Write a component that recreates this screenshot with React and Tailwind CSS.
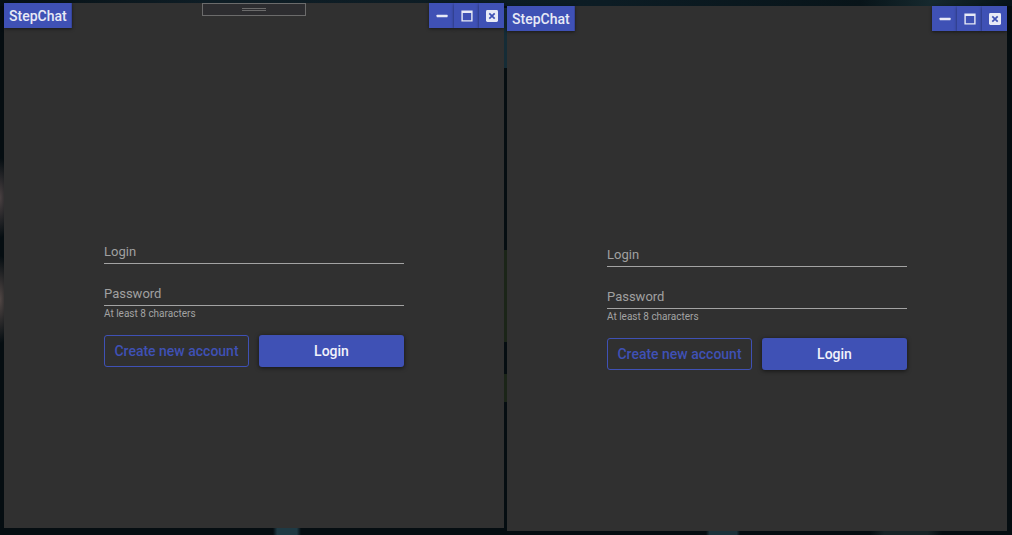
import React, { useId } from "react";

function MinimizeIcon() {
  return (
    <svg viewBox="0 0 16 16" className="size-4" fill="currentColor" aria-hidden="true">
      <rect x="2.6" y="6.8" width="11" height="2.4" rx="0.4" />
    </svg>
  );
}

function MaximizeIcon() {
  return (
    <svg viewBox="0 0 16 16" className="size-4" fill="currentColor" aria-hidden="true">
      <path fillRule="evenodd" d="M2.4 2.4h11.2v11.2H2.4zM3.8 5v7.2h8.4V5z" />
    </svg>
  );
}

function CloseIcon() {
  return (
    <svg viewBox="0 0 16 16" className="size-4" aria-hidden="true">
      <rect x="2" y="2" width="12" height="12" rx="1.4" fill="currentColor" />
      <path d="M5.3 5.3l5.4 5.4M10.7 5.3l-5.4 5.4" stroke="#3f51b5" strokeWidth="1.7" fill="none" />
    </svg>
  );
}

function TitleButton({ label, children }) {
  return (
    <button
      type="button"
      aria-label={label}
      className="flex h-full w-[25px] items-center justify-center bg-[#3f51b5] text-[#e8eaf6] shadow-[0_1px_3px_rgba(0,0,0,0.5)]"
    >
      {children}
    </button>
  );
}

function Field({ label, type, autoComplete, hint }) {
  const id = useId();
  return (
    <div className="flex flex-col">
      <div className="grid">
        <input
          id={id}
          type={type}
          autoComplete={autoComplete}
          placeholder=" "
          className="peer col-start-1 row-start-1 h-6 w-full border-b border-[#a3a3a3] bg-transparent text-[13px] leading-5 text-white outline-none"
        />
        <label
          htmlFor={id}
          className="invisible pointer-events-none col-start-1 row-start-1 self-center pb-px text-[13px] leading-5 text-[#a0a0a0] peer-placeholder-shown:visible"
        >
          {label}
        </label>
      </div>
      {hint && <p className="text-[10px] leading-[15px] text-[#a3a3a3]">{hint}</p>}
    </div>
  );
}

function LoginWindow({ className, handle }) {
  return (
    <section className={`relative flex min-w-0 flex-1 flex-col bg-[#303030] ${className}`}>
      <header className="flex h-[25px] items-stretch justify-between">
        <h1 className="flex items-center bg-[#3f51b5] px-[5px] text-[14px] leading-5 font-medium text-[#e8eaf6] shadow-[0_1px_3px_rgba(0,0,0,0.5),inset_-1px_0_0_#35449c]">
          StepChat
        </h1>
        <div className="flex">
          <TitleButton label="Minimize">
            <MinimizeIcon />
          </TitleButton>
          <TitleButton label="Maximize">
            <MaximizeIcon />
          </TitleButton>
          <TitleButton label="Close">
            <CloseIcon />
          </TitleButton>
        </div>
      </header>

      {handle && (
        <div className="absolute top-0 left-1/2 flex h-[13px] w-[104px] -translate-x-1/2 items-center justify-center border border-[#6b6b6b] bg-[#2d2d30]">
          <div className="h-[3px] w-6 border-y border-[#6b6b6b]" />
        </div>
      )}

      <div className="flex flex-1 items-center justify-center">
        <form
          className="flex w-[300px] flex-col gap-[18px] pt-[51px]"
          onSubmit={(event) => event.preventDefault()}
        >
          <Field label="Login" type="text" autoComplete="username" />
          <div className="flex flex-col gap-[14px]">
            <Field
              label="Password"
              type="password"
              autoComplete="current-password"
              hint="At least 8 characters"
            />
            <div className="grid grid-cols-2 gap-[10px]">
              <button
                type="button"
                className="h-8 rounded-[3px] border border-[#3f51b5] text-[14px] leading-5 font-medium whitespace-nowrap text-[#3f51b5]"
              >
                Create new account
              </button>
              <button
                type="submit"
                className="h-8 rounded-[3px] bg-[#3f51b5] text-[14px] leading-5 font-medium text-[#f1f2fa] shadow-[0_1px_4px_rgba(0,0,0,0.6)]"
              >
                Login
              </button>
            </div>
          </div>
        </form>
      </div>
    </section>
  );
}

export default function App() {
  return (
    <main className="flex min-h-screen gap-[3px] bg-[#050d11] bg-[radial-gradient(12px_40px_at_0%_37%,#4a4142,transparent),radial-gradient(12px_44px_at_0%_56%,#514745,transparent),linear-gradient(#152c36,#152c36),linear-gradient(#1b2518,#1b2518),linear-gradient(#1b2518,#1b2518),linear-gradient(90deg,transparent,#1f3a44_15%,#1f3a44_85%,transparent),linear-gradient(90deg,transparent,#1c323b_10%,#1c323b_90%,transparent),linear-gradient(90deg,transparent,#182427_20%,#182427_80%,transparent),linear-gradient(90deg,#061015,#0e1d25_20%,#0c1c24_60%,#081419_85%,#16292e_92%,#07131a)] bg-[size:auto,auto,3px_60px,3px_92px,3px_28px,28px_7px,34px_4px,72px_4px,100%_6px] bg-[position:0_0,0_0,504px_8px,504px_250px,504px_374px,273px_100%,706px_100%,870px_100%,0_0] bg-no-repeat pr-[5px] pl-1 font-[Roboto,sans-serif]">
      <LoginWindow className="mt-[3px] mb-[7px]" handle />
      <LoginWindow className="mt-[6px] mb-[4px]" />
    </main>
  );
}
